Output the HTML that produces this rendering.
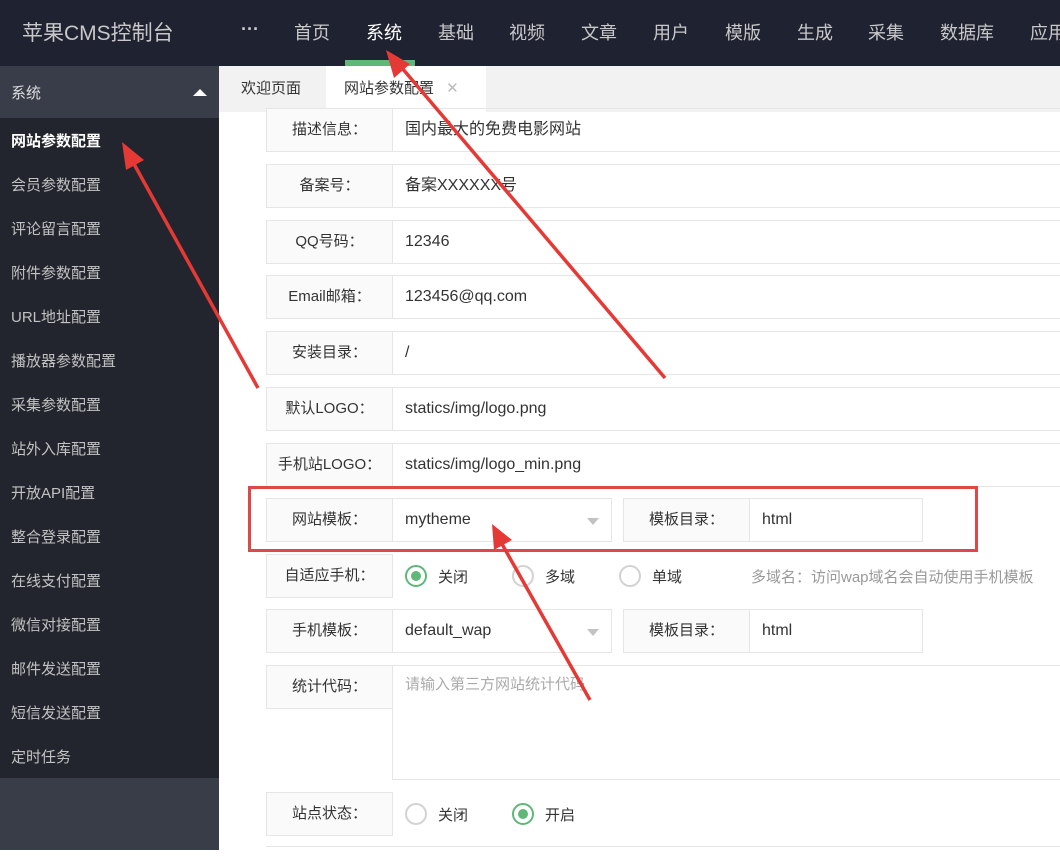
<!DOCTYPE html>
<html><head><meta charset="utf-8"><style>
*{margin:0;padding:0;box-sizing:border-box}
body{width:1060px;height:850px;overflow:hidden;background:#fff;font-family:"Liberation Sans","Noto Sans CJK SC",sans-serif;position:relative;font-size:15px;color:#333}
.hdr{position:absolute;left:0;top:0;width:1060px;height:66px;background:#1f2230;overflow:hidden}
.logo{position:absolute;left:22px;top:17px;color:#c8c8c8;font-size:21px}
.nav{position:absolute;top:19px;color:#c8c8c8;font-size:18px;white-space:nowrap}
.navline{position:absolute;left:345px;top:60px;width:70px;height:6px;background:#5fb878}
.side{position:absolute;left:0;top:66px;width:219px;height:784px;background:#393d47}
.sh{position:absolute;left:0;top:66px;width:219px;height:52px;background:#393d49;color:#ddd;font-size:15px;padding:16px 11px}
.tri{position:absolute;right:12px;top:23px;width:0;height:0;border-left:7px solid transparent;border-right:7px solid transparent;border-bottom:7px solid #fff}
.list{position:absolute;left:0;top:118px;width:219px;height:660px;background:#22252d}
.it{position:absolute;left:11px;color:#c2c2c2;font-size:15px}
.tabs{position:absolute;left:219px;top:66px;width:841px;height:46px;background:#f2f2f2}
.tab{position:absolute;top:0;height:46px;line-height:46px;font-size:15px;color:#333}
.lab{position:absolute;left:266px;width:127px;height:44px;background:#fafafa;border:1px solid #e6e6e6;text-align:center;line-height:42px;font-size:15px}
.inp{position:absolute;left:392px;width:680px;height:44px;border:1px solid #e6e6e6;line-height:42px;padding-left:12px;font-size:16px}
.radio{position:absolute;width:22px;height:22px;border:2px solid #d2d2d2;border-radius:50%}
.radio.on{border-color:#5fb878}
.radio.on:after{content:"";position:absolute;left:4px;top:4px;width:10px;height:10px;border-radius:50%;background:#5fb878}
.rt{position:absolute;font-size:15px}
.arr{position:absolute;width:0;height:0;border-left:6px solid transparent;border-right:6px solid transparent;border-top:7px solid #c2c2c2}
</style></head><body>
<div class="hdr">
<div class="logo">苹果CMS控制台</div>
<div class="nav" style="left:241px;font-weight:bold">···</div>
<div class="nav" style="left:294px">首页</div>
<div class="nav" style="left:366px;color:#fff">系统</div>
<div class="nav" style="left:438px">基础</div>
<div class="nav" style="left:509px">视频</div>
<div class="nav" style="left:581px">文章</div>
<div class="nav" style="left:653px">用户</div>
<div class="nav" style="left:725px">模版</div>
<div class="nav" style="left:797px">生成</div>
<div class="nav" style="left:868px">采集</div>
<div class="nav" style="left:940px">数据库</div>
<div class="nav" style="left:1030px">应用</div>
<div class="navline"></div>
</div>
<div class="side"></div>
<div class="sh">系统<div class="tri"></div></div>
<div class="list">
<div class="it" style="top:12px;color:#fff;font-weight:bold">网站参数配置</div>
<div class="it" style="top:56px">会员参数配置</div>
<div class="it" style="top:100px">评论留言配置</div>
<div class="it" style="top:144px">附件参数配置</div>
<div class="it" style="top:188px">URL地址配置</div>
<div class="it" style="top:232px">播放器参数配置</div>
<div class="it" style="top:276px">采集参数配置</div>
<div class="it" style="top:320px">站外入库配置</div>
<div class="it" style="top:364px">开放API配置</div>
<div class="it" style="top:408px">整合登录配置</div>
<div class="it" style="top:452px">在线支付配置</div>
<div class="it" style="top:496px">微信对接配置</div>
<div class="it" style="top:540px">邮件发送配置</div>
<div class="it" style="top:584px">短信发送配置</div>
<div class="it" style="top:628px">定时任务</div>
</div>
<div class="tabs">
<div class="tab" style="left:22px">欢迎页面</div>
<div class="tab" style="left:107px;width:160px;background:#fff;padding-left:18px">网站参数配置 <span style="color:#bbb;margin-left:8px">✕</span></div>
</div>

<div class="lab" style="top:108px">描述信息：</div><div class="inp" style="top:108px">国内最大的免费电影网站</div>
<div class="lab" style="top:164px">备案号：</div><div class="inp" style="top:164px">备案XXXXXX号</div>
<div class="lab" style="top:220px">QQ号码：</div><div class="inp" style="top:220px">12346</div>
<div class="lab" style="top:275px">Email邮箱：</div><div class="inp" style="top:275px">123456@qq.com</div>
<div class="lab" style="top:331px">安装目录：</div><div class="inp" style="top:331px">/</div>
<div class="lab" style="top:387px">默认LOGO：</div><div class="inp" style="top:387px">statics/img/logo.png</div>
<div class="lab" style="top:443px">手机站LOGO：</div><div class="inp" style="top:443px">statics/img/logo_min.png</div>

<div class="lab" style="top:498px">网站模板：</div><div class="inp" style="top:498px;width:220px">mytheme<div class="arr" style="left:194px;top:19px"></div></div>
<div class="lab" style="top:498px;left:623px">模板目录：</div><div class="inp" style="top:498px;left:749px;width:174px">html</div>

<div class="lab" style="top:554px">自适应手机：</div>
<div class="radio on" style="left:405px;top:565px"></div><div class="rt" style="left:438px;top:566px">关闭</div>
<div class="radio" style="left:512px;top:565px"></div><div class="rt" style="left:545px;top:566px">多域</div>
<div class="radio" style="left:619px;top:565px"></div><div class="rt" style="left:652px;top:566px">单域</div>
<div class="rt" style="left:751px;top:566px;color:#999;font-size:15px;white-space:nowrap">多域名：访问wap域名会自动使用手机模板</div>

<div class="lab" style="top:609px">手机模板：</div><div class="inp" style="top:609px;width:220px">default_wap<div class="arr" style="left:194px;top:19px"></div></div>
<div class="lab" style="top:609px;left:623px">模板目录：</div><div class="inp" style="top:609px;left:749px;width:174px">html</div>

<div class="lab" style="top:665px">统计代码：</div><div class="inp" style="top:665px;height:115px;line-height:38px;color:#aaa;font-size:15px">请输入第三方网站统计代码</div>
<div style="position:absolute;left:266px;top:707px;width:127px;height:73px;border-right:1px solid #e6e6e6"></div>

<div class="lab" style="top:792px">站点状态：</div>
<div class="radio" style="left:405px;top:803px"></div><div class="rt" style="left:438px;top:804px">关闭</div>
<div class="radio on" style="left:512px;top:803px"></div><div class="rt" style="left:545px;top:804px">开启</div>
<div style="position:absolute;left:266px;top:846px;width:800px;height:10px;border-top:1px solid #e6e6e6"></div>

<div style="position:absolute;left:248px;top:486px;width:730px;height:66px;border:3px solid #e04848"></div>

<svg width="1060" height="850" style="position:absolute;left:0;top:0">
<g stroke="#e53935" stroke-width="3.5" fill="#e53935">
<line x1="258" y1="388" x2="134" y2="164"/>
<polygon points="122,142 144,160 126,170" stroke="none"/>
<line x1="665" y1="378" x2="402" y2="68"/>
<polygon points="386,50 410,64 394,78" stroke="none"/>
<line x1="590" y1="700" x2="502" y2="544"/>
<polygon points="492,524 512,540 494,550" stroke="none"/>
</g>
</svg>
</body></html>
